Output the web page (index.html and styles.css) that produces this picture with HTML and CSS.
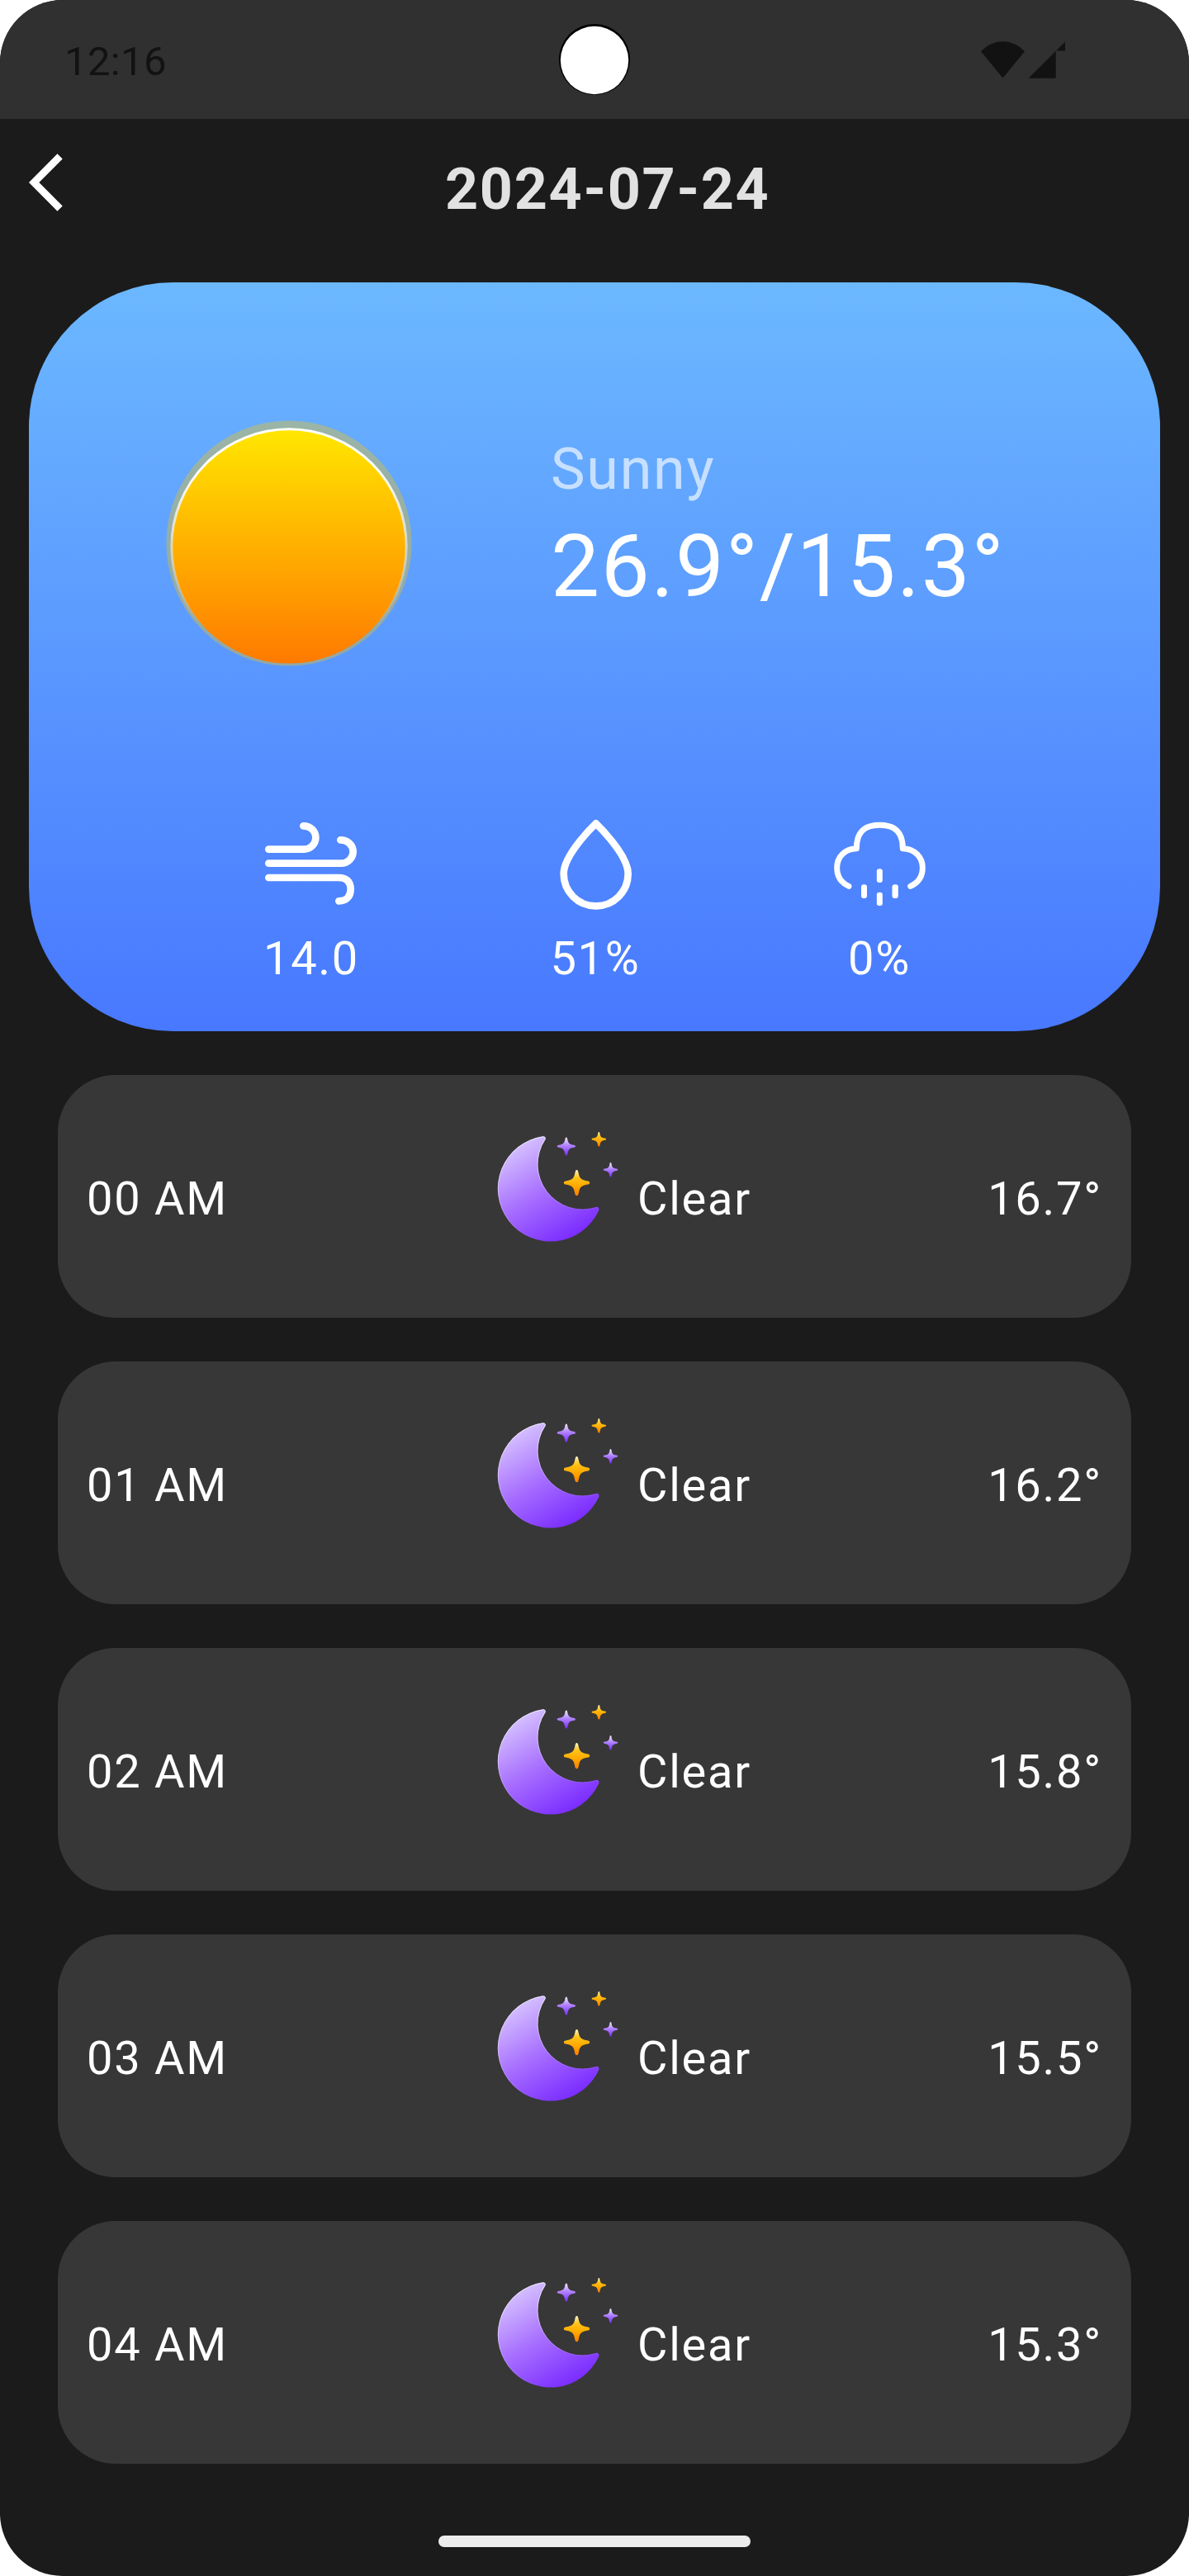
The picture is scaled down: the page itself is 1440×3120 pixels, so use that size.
FILE: index.html
```html
<!DOCTYPE html>
<html lang="en">
<head>
<meta charset="utf-8">
<title>2024-07-24</title>
<link rel="stylesheet" href="styles.css">
</head>
<body>
<svg class="defs" width="0" height="0" aria-hidden="true">
  <defs>
    <linearGradient id="moonFill" gradientUnits="userSpaceOnUse" x1="190" y1="130" x2="400" y2="480">
      <stop offset="0" stop-color="#d8c6ff"/><stop offset=".5" stop-color="#a870ff"/><stop offset="1" stop-color="#7a2bff"/>
    </linearGradient>
    <linearGradient id="moonEdge" gradientUnits="userSpaceOnUse" x1="200" y1="110" x2="330" y2="470">
      <stop offset="0" stop-color="#fff" stop-opacity=".7"/><stop offset="1" stop-color="#fff" stop-opacity="0"/>
    </linearGradient>
    <linearGradient id="violet" x1="0" y1="0" x2="0" y2="1">
      <stop offset="0" stop-color="#f4ecff"/><stop offset=".45" stop-color="#b184ff"/><stop offset="1" stop-color="#7a2bff"/>
    </linearGradient>
    <linearGradient id="amber" x1="0" y1="0" x2="0" y2="1">
      <stop offset="0" stop-color="#fff6c8"/><stop offset=".3" stop-color="#ffc21a"/><stop offset=".6" stop-color="#ffab00"/><stop offset="1" stop-color="#ff7d00"/>
    </linearGradient>
    <path id="star" d="M0-47C4-47 5-43 6-37C10-16 15-12 37-7C43-6 47-5 47 0C47 4 43 5 37 6C16 10 11 15 7 37C6 43 4 47 0 47C-4 47-6 43-7 37C-11 15-16 10-37 6C-43 5-47 4-47 0C-47-5-43-6-37-7C-15-12-10-16-6-37C-5-43-4-47 0-47Z"/>
    <symbol id="night" viewBox="105 60 480 480">
      <path d="M292 109C300 108 305 114 301 121A163 163 0 0 0 486 366C492 364 498 369 496 377A192 192 0 1 1 292 109Z" fill="url(#moonFill)"/>
      <path d="M292 110.500C299 110 303 114 300 120A164.500 164.500 0 0 0 486 367.500C491 366 496 370 494 377A190.500 190.500 0 1 1 292 110.500Z" fill="none" stroke="url(#moonEdge)" stroke-width="3"/>
      <use href="#star" fill="url(#violet)" transform="translate(377.500 145.500) scale(.71)"/>
      <use href="#star" fill="url(#amber)" transform="translate(496 119.500) scale(.56)"/>
      <use href="#star" fill="url(#amber)" transform="translate(415.500 278)"/>
      <use href="#star" fill="url(#violet)" transform="translate(538.500 230.500) scale(.56)"/>
    </symbol>
  </defs>
</svg>
<div class="screen">
  <header class="status">
    <span class="clock">12:16</span>
    <svg class="camera" viewBox="0 0 86 86"><circle cx="43" cy="43" r="43" fill="#000"/><circle cx="43" cy="44" r="41.200" fill="#fff"/></svg>
    <svg class="signals" viewBox="0 0 102 45" fill="#121212">
      <path d="M26.500 44.500L0 12.200C7 5 16 .2 26.500 .2S46 5 53 12.200Z"/>
      <path d="M57.700 44.700L90.700 11.700V44.700Z"/><path d="M91 11.500L102 .6V11.500Z"/>
    </svg>
  </header>
  <nav class="topbar">
    <svg class="back" viewBox="0 0 42 72" fill="none" stroke="#fff" stroke-width="8.800"><path d="M37.600 4.300L6.200 36L37.600 67.700"/></svg>
    <h1 class="title">2024-07-24</h1>
  </nav>
  <main>
    <section class="summary">
      <div class="now">
        <svg class="sun" viewBox="0 0 298 298">
          <defs>
            <linearGradient id="sunFill" x1="0" y1="0" x2="0" y2="1"><stop offset="0" stop-color="#ffe600"/><stop offset="1" stop-color="#ff7a00"/></linearGradient>
            <linearGradient id="sunEdge" x1="0" y1="0" x2="0" y2="1"><stop offset="0" stop-color="#fff"/><stop offset=".15" stop-color="#fff"/><stop offset=".85" stop-color="#fff" stop-opacity="0"/></linearGradient>
          </defs>
          <circle cx="149" cy="149" r="148.600" fill="#ffc500" fill-opacity=".35"/>
          <circle cx="149" cy="153" r="141.600" fill="url(#sunFill)"/>
          <circle cx="149" cy="153" r="142.200" fill="none" stroke="url(#sunEdge)" stroke-width="3"/>
        </svg>
        <div class="reading">
          <div class="condition">Sunny</div>
          <div class="range">26.9°/15.3°</div>
        </div>
      </div>
      <div class="metrics">
        <div class="metric">
          <svg class="metric-icon" viewBox="81 48 420 420" fill="none" stroke="#fff" stroke-width="26" stroke-linecap="round"><path d="M136 206H264C288 206 307 187 307 163.500S288 121 262 121M136 257H399C423 257 443 238 443 214.500S423 172 397 172M136 309H391C419 309 434 324 434 351S418 394 391 394"/></svg>
          <span>14.0</span>
        </div>
        <div class="metric">
          <svg class="metric-icon" viewBox="1113 48 420 420" fill="none" stroke="#fff" stroke-width="26" stroke-linejoin="round"><path d="M1325 112C1325 112 1208 223 1208 295C1208 360 1260 412 1325 412S1442 360 1442 295C1442 223 1325 112 1325 112Z"/></svg>
          <span>51%</span>
        </div>
        <div class="metric">
          <svg class="metric-icon" viewBox="105 48 420 420" fill="none" stroke="#fff" stroke-width="21" stroke-linecap="round" stroke-linejoin="round">
            <path d="M204 340C177 328 161 305 161 273C161 233 190 204 232 203C232 148 256 118 316 118S400 148 400 203C442 204 472 233 472 273C472 305 455 328 428 340"/>
            <g fill="#fff" stroke="none"><rect x="305.500" y="277" width="21" height="50" rx="9"/><rect x="305.500" y="362" width="21" height="49" rx="9"/><rect x="249" y="334" width="21" height="50" rx="9"/><rect x="361.500" y="334" width="22" height="50" rx="9"/></g>
          </svg>
          <span>0%</span>
        </div>
      </div>
    </section>
    <ul class="hours">
      <li class="hour"><span class="time">00 AM</span><svg class="icon"><use href="#night"/></svg><span class="label">Clear</span><span class="temp">16.7°</span></li>
      <li class="hour"><span class="time">01 AM</span><svg class="icon"><use href="#night"/></svg><span class="label">Clear</span><span class="temp">16.2°</span></li>
      <li class="hour"><span class="time">02 AM</span><svg class="icon"><use href="#night"/></svg><span class="label">Clear</span><span class="temp">15.8°</span></li>
      <li class="hour"><span class="time">03 AM</span><svg class="icon"><use href="#night"/></svg><span class="label">Clear</span><span class="temp">15.5°</span></li>
      <li class="hour"><span class="time">04 AM</span><svg class="icon"><use href="#night"/></svg><span class="label">Clear</span><span class="temp">15.3°</span></li>
    </ul>
  </main>
  <div class="home-bar"></div>
</div>
</body>
</html>
```
FILE: styles.css
```css
* { box-sizing: border-box; }
body {
  margin: 0;
  background: #fff;
  font-family: Roboto, sans-serif;
  font-size: 56px;
  line-height: 84px;
  letter-spacing: 1.75px;
  color: #fff;
}
svg { display: block; flex: none; }
.defs { position: absolute; }
.screen {
  width: 1440px;
  height: 3120px;
  display: flex;
  flex-direction: column;
  background: #1b1b1b;
  border-radius: 76px;
  overflow: hidden;
}
.status {
  height: 144px;
  flex: none;
  display: grid;
  grid-template-columns: 599px 86px 1fr;
  align-items: center;
  padding: 0 150px 0 78px;
  background: #303030;
}
.clock {
  font-size: 49px;
  line-height: 58px;
  letter-spacing: .35px;
  color: #121212;
  padding-top: 5px;
}
.camera { width: 86px; height: 86px; }
.signals { width: 102px; height: 45px; justify-self: end; }
.topbar {
  height: 198px;
  flex: none;
  display: flex;
  align-items: flex-start;
  padding: 41px 35px 0;
}
.back { width: 42px; height: 72px; }
.title {
  margin: 2px 0 0 462px;
  font-size: 70px;
  font-weight: 700;
  line-height: 84px;
  letter-spacing: 1.7px;
  color: #e2e2e2;
}
.summary {
  height: 907px;
  margin: 0 35px;
  padding: 167px 170px 0 166px;
  border-radius: 175px;
  background: linear-gradient(180deg, #6cb8ff, #4878ff);
}
.now { display: flex; height: 467px; }
.sun { width: 298px; height: 298px; }
.reading { margin-left: 168px; }
.condition {
  font-size: 70px;
  line-height: 84px;
  margin-top: 17px;
  color: #c7e0ff;
}
.range {
  font-size: 105px;
  line-height: 124px;
  margin-top: 15px;
  white-space: nowrap;
}
.metrics {
  display: grid;
  grid-template-columns: repeat(3, 344px);
  margin-left: 4px;
}
.metric { display: flex; flex-direction: column; align-items: center; }
.metric-icon { width: 140px; height: 140px; }
.metric span { margin-top: 3px; }
.hours {
  list-style: none;
  margin: 53px 70px 0;
  padding: 0;
  display: flex;
  flex-direction: column;
  gap: 53px;
}
.hour {
  height: 294px;
  display: grid;
  grid-template-columns: 490px 160px auto 1fr;
  align-items: center;
  padding: 0 35px;
  border-radius: 70px;
  background: #373737;
}
.time, .label, .temp { padding-top: 6px; }
.icon { width: 160px; height: 160px; margin-bottom: 18px; }
.label { margin-left: 17px; }
.temp { justify-self: end; }
.home-bar {
  width: 378px;
  height: 14px;
  margin: 87px auto 0;
  border-radius: 7px;
  background: #ececec;
}
```
